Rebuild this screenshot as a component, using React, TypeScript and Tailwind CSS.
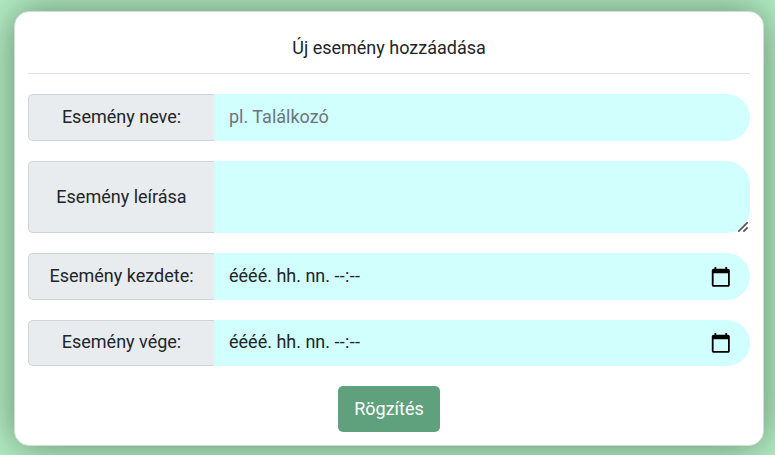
import type { ReactNode } from 'react';

function Row({ label, height, inset = 'pb-[2px]', children }: { label: string; height: string; inset?: string; children: ReactNode }) {
  return (
    <div className={`flex w-full ${height}`}>
      <div className={`flex w-[186px] shrink-0 items-center justify-center rounded-l-[5px] border border-r-0 border-[#ced4da] bg-[#e9ecef] ${inset}`}>
        {label}
      </div>
      {children}
    </div>
  );
}

function CalendarIcon() {
  return (
    <svg className="h-[21.6px] w-[21.6px]" viewBox="0 0 24 24" fill="#000">
      <path d="M20 3h-1V1h-2v2H7V1H5v2H4c-1.1 0-2 .9-2 2v16c0 1.1.9 2 2 2h16c1.1 0 2-.9 2-2V5c0-1.1-.9-2-2-2zm0 18H4V8h16v13z" />
    </svg>
  );
}

function DateField() {
  return (
    <div className="flex flex-1 items-center justify-between rounded-r-[24px] bg-[#d0fffd] pr-[18px] pl-[15px]">
      <span className="pb-[3px]">
        éééé. hh. nn. <span className="tracking-[0.3px]">--:--</span>
      </span>
      <CalendarIcon />
    </div>
  );
}

export default function App() {
  return (
    <div className="h-[455px] w-[775px] overflow-hidden bg-[#b2eec2] pt-[11px] pl-[14px] font-['Roboto',sans-serif] text-[18px] leading-[27px] text-[#212529]">
      <form className="flex h-[435px] w-[750px] flex-col items-center rounded-[15px] border border-[#d4dcd6] bg-white px-[13px] shadow-[0_0_40px_rgba(0,0,0,0.44)]">
        <h1 className="h-[62px] w-full border-b border-[#dee2e6] pt-[22px] text-center">Új esemény hozzáadása</h1>
        <div className="mt-[20px] flex w-full flex-col gap-[20px]">
          <Row label="Esemény neve:" height="h-[47px]">
            <input
              className="min-w-0 flex-1 rounded-r-[24px] bg-[#d0fffd] px-[15px] pb-[2px] outline-none placeholder:text-[#6c757d]"
              placeholder="pl. Találkozó"
            />
          </Row>
          <Row label="Esemény leírása" height="h-[72px]">
            <div className="flex flex-1 items-end justify-end rounded-r-[24px] bg-[#d0fffd] pr-[2px] pb-[1px]">
              <svg className="h-[10px] w-[10px]" viewBox="0 0 10 10" fill="none" stroke="#555" strokeWidth="1.7">
                <path d="M0.3 9.7 L9.7 0.3 M5.3 9.7 L9.7 5.3" />
              </svg>
            </div>
          </Row>
          <Row label="Esemény kezdete:" height="h-[47px]">
            <DateField />
          </Row>
          <Row label="Esemény vége:" height="h-[46px]" inset="pb-[3px]">
            <DateField />
          </Row>
        </div>
        <button type="button" className="mt-[20px] h-[46px] w-[102px] rounded-[5px] bg-[#5fa17c] pb-px text-white">
          Rögzítés
        </button>
      </form>
    </div>
  );
}
